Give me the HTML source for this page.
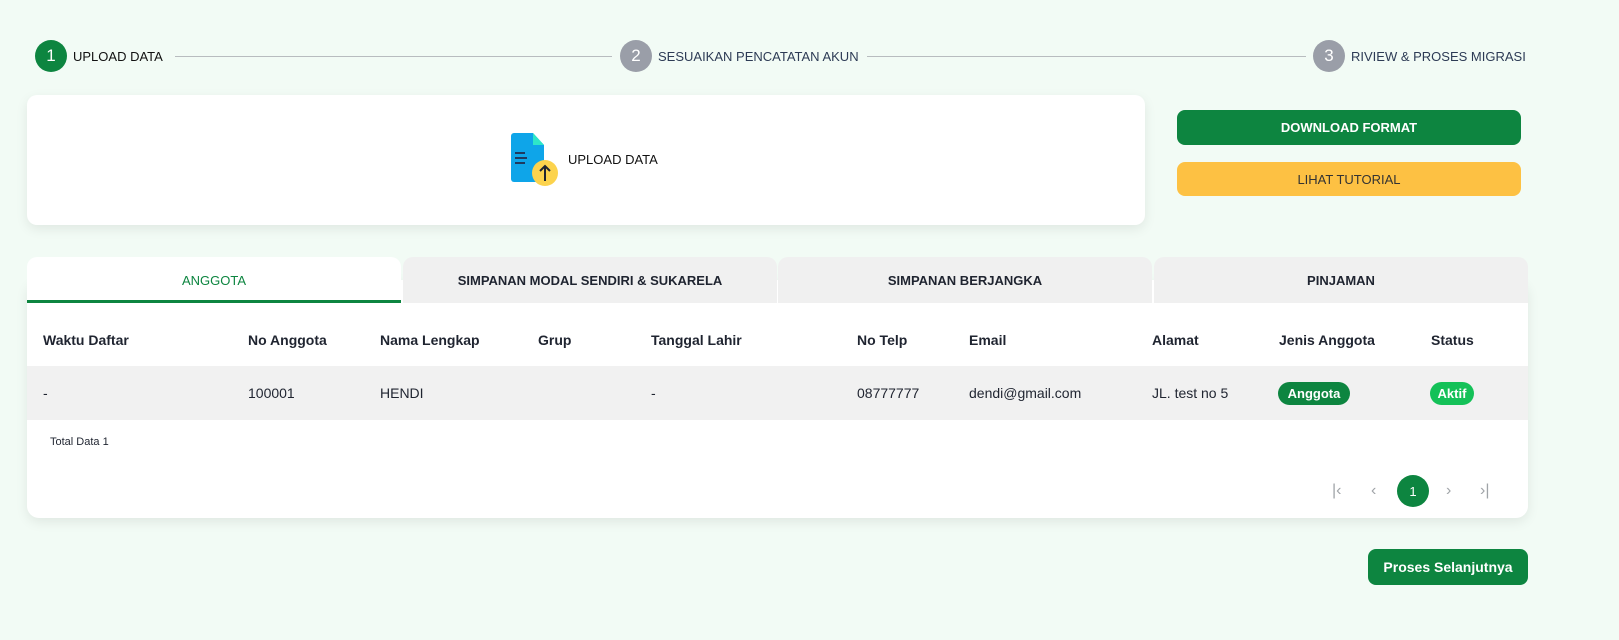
<!DOCTYPE html>
<html><head><meta charset="utf-8"><style>
*{margin:0;padding:0;box-sizing:border-box}
body{width:1619px;height:640px;background:#f2fbf5;font-family:"Liberation Sans",sans-serif;color:#1f2430;position:relative;overflow:hidden}
.a{position:absolute}
.c{width:32px;height:32px;border-radius:50%;color:#fff;font-size:17px;display:flex;align-items:center;justify-content:center}
.st{font-size:13px;top:49px}
.ln{height:1px;background:#b8bcbf;top:56px}
.card{background:#fff;border-radius:10px;box-shadow:0 4px 12px rgba(0,0,0,.08)}
.btn{border-radius:8px;font-size:13px;font-weight:bold;display:flex;align-items:center;justify-content:center}
.tab{top:257px;height:46px;width:374px;background:#f0f0f0;border-radius:10px 10px 0 0;font-size:13px;font-weight:bold;display:flex;align-items:center;justify-content:center}
.h{top:332px;font-size:14px;font-weight:bold}
.d{top:385px;font-size:14px}
.pill{color:#fff;font-size:13px;font-weight:bold;border-radius:12px;height:23px;display:flex;align-items:center;justify-content:center}
.pg{top:482px;font-size:16px;color:#a0a4a8}
</style></head><body>
<div class="a c" style="left:35px;top:40px;background:#0d8540">1</div>
<div class="a st" style="left:73px;color:#111">UPLOAD DATA</div>
<div class="a ln" style="left:175px;width:437px"></div>
<div class="a c" style="left:620px;top:40px;background:#9a9ea8">2</div>
<div class="a st" style="left:658px;color:#2d3b55">SESUAIKAN PENCATATAN AKUN</div>
<div class="a ln" style="left:867px;width:439px"></div>
<div class="a c" style="left:1313px;top:40px;background:#9a9ea8">3</div>
<div class="a st" style="left:1351px;color:#2d3b55">RIVIEW &amp; PROSES MIGRASI</div>

<div class="a card" style="left:27px;top:95px;width:1118px;height:130px"></div>
<svg class="a" style="left:510px;top:133px" width="52" height="56" viewBox="0 0 52 56">
<path d="M4 0h19l11 12v34a3 3 0 0 1-3 3H4a3 3 0 0 1-3-3V3a3 3 0 0 1 3-3z" fill="#0ea5e9"/>
<path d="M23 0l11 12H23z" fill="#2ee6c8"/>
<path d="M5 20h10M5 25h12M5 30h10" stroke="#1e3a5f" stroke-width="2"/>
<circle cx="35" cy="40" r="13" fill="#fcd34d"/>
<path d="M35 48V33M30 38l5-5 5 5" stroke="#1f2430" stroke-width="2" fill="none"/>
</svg>
<div class="a" style="left:568px;top:152px;font-size:13px;color:#111">UPLOAD DATA</div>

<div class="a btn" style="left:1177px;top:110px;width:344px;height:35px;background:#0d8540;color:#fff">DOWNLOAD FORMAT</div>
<div class="a btn" style="left:1177px;top:162px;width:344px;height:34px;background:#fdc143;color:#333;font-weight:normal">LIHAT TUTORIAL</div>

<div class="a card" style="left:27px;top:280px;width:1501px;height:238px;border-radius:12px"></div>
<div class="a tab" style="left:27px;background:#fff;color:#0d8540;font-weight:normal;box-shadow:inset 0 -3px 0 #0d8540">ANGGOTA</div>
<div class="a tab" style="left:403px">SIMPANAN MODAL SENDIRI &amp; SUKARELA</div>
<div class="a tab" style="left:778px">SIMPANAN BERJANGKA</div>
<div class="a tab" style="left:1154px">PINJAMAN</div>

<div class="a h" style="left:43px">Waktu Daftar</div>
<div class="a h" style="left:248px">No Anggota</div>
<div class="a h" style="left:380px">Nama Lengkap</div>
<div class="a h" style="left:538px">Grup</div>
<div class="a h" style="left:651px">Tanggal Lahir</div>
<div class="a h" style="left:857px">No Telp</div>
<div class="a h" style="left:969px">Email</div>
<div class="a h" style="left:1152px">Alamat</div>
<div class="a h" style="left:1279px">Jenis Anggota</div>
<div class="a h" style="left:1431px">Status</div>

<div class="a" style="left:27px;top:366px;width:1501px;height:54px;background:#f1f1f1"></div>
<div class="a d" style="left:43px">-</div>
<div class="a d" style="left:248px">100001</div>
<div class="a d" style="left:380px">HENDI</div>
<div class="a d" style="left:651px">-</div>
<div class="a d" style="left:857px">08777777</div>
<div class="a d" style="left:969px">dendi@gmail.com</div>
<div class="a d" style="left:1152px">JL. test no 5</div>
<div class="a pill" style="left:1278px;top:382px;width:72px;background:#0d8540">Anggota</div>
<div class="a pill" style="left:1430px;top:382px;width:44px;background:#14c158">Aktif</div>

<div class="a" style="left:50px;top:436px;font-size:11px">Total Data 1</div>
<div class="a pg" style="left:1332px">|‹</div>
<div class="a pg" style="left:1371px">‹</div>
<div class="a c" style="left:1397px;top:475px;background:#0d8540;font-size:13px">1</div>
<div class="a pg" style="left:1446px">›</div>
<div class="a pg" style="left:1480px">›|</div>

<div class="a btn" style="left:1368px;top:549px;width:160px;height:36px;background:#0d8540;color:#fff;font-size:14px">Proses Selanjutnya</div>
</body></html>
